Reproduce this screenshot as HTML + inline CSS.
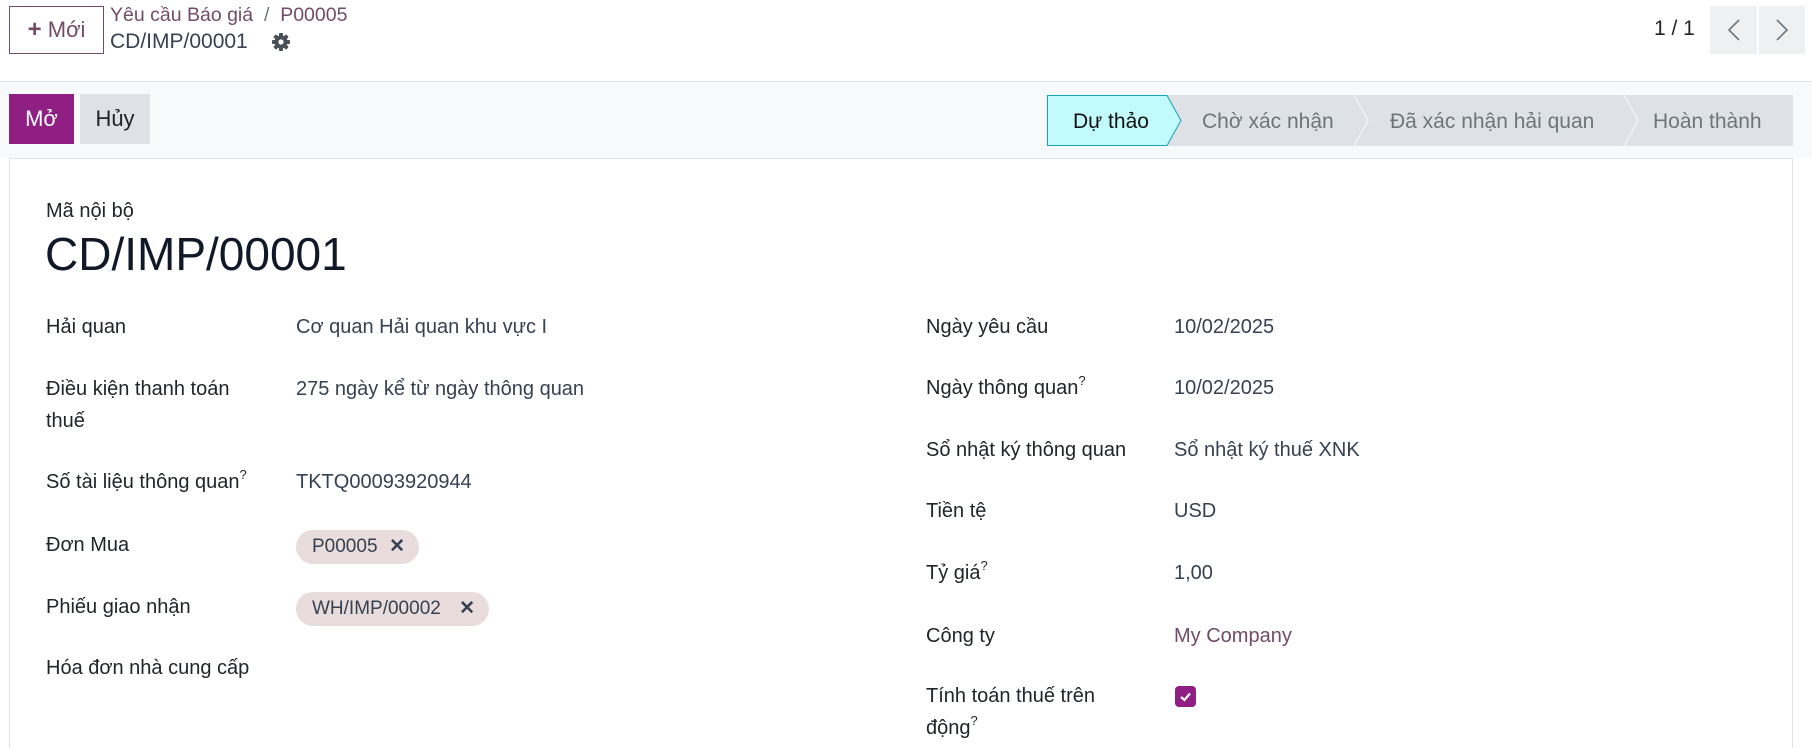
<!DOCTYPE html>
<html><head><meta charset="utf-8"><style>
*{box-sizing:border-box;margin:0;padding:0}
html,body{width:1812px;height:748px;overflow:hidden}
body{background:#fff;font-family:"Liberation Sans",sans-serif;color:#374151;font-size:20px;position:relative}
.a{position:absolute;white-space:nowrap;line-height:24px}
.lbl{color:#212529}
.val{color:#374151}
.tag{position:absolute;height:34px;border-radius:17px;background:#e8dcdc;color:#374151;font-size:19px;line-height:34px;padding-left:16px}
.tag b{position:absolute;right:14px;top:0;font-weight:bold;font-size:19px}
sup{font-size:13px;vertical-align:baseline;position:relative;top:-9px;line-height:0}
</style></head><body>
<div class="a" style="left:9px;top:6px;width:95px;height:48px;border:1px solid #714b67;color:#714b67;font-size:22px;line-height:46px;text-align:center"><b style="font-size:24px">+</b> Mới</div>
<div class="a" style="left:110px;top:3px;color:#714b67;font-size:19.5px">Yêu cầu Báo giá &nbsp;<span style="color:#6c757d">/</span>&nbsp; P00005</div>
<div class="a" style="left:110px;top:30px;color:#374151;font-size:21px">CD/IMP/00001</div>
<svg class="a" style="left:271px;top:32px" width="20" height="20" viewBox="0 0 20 20"><g fill="#495057"><circle cx="10" cy="10" r="6.5"/><rect x="8" y="1" width="4" height="18" rx="1"/><rect x="1" y="8" width="18" height="4" rx="1"/><rect x="8" y="1" width="4" height="18" rx="1" transform="rotate(45 10 10)"/><rect x="8" y="1" width="4" height="18" rx="1" transform="rotate(-45 10 10)"/></g><circle cx="10" cy="10" r="2.6" fill="#fff"/></svg>
<div class="a" style="left:1654px;top:17px;font-size:21px;color:#212529">1 / 1</div>
<div class="a" style="left:1710px;top:6px;width:47px;height:48px;background:#eef0f2"></div>
<div class="a" style="left:1759px;top:6px;width:46px;height:48px;background:#eef0f2"></div>
<svg class="a" style="left:1710px;top:6px" width="95" height="48"><path d="M29 14 L19 24 L29 34" stroke="#6c757d" stroke-width="1.6" fill="none"/><path d="M67 14 L77 24 L67 34" stroke="#6c757d" stroke-width="1.6" fill="none"/></svg>
<div class="a" style="left:0;top:81px;width:1812px;height:77px;background:#f8f9fa;border-top:1px solid #dee2e6"></div>
<div class="a" style="left:9px;top:94px;width:65px;height:50px;background:#8f1f82;color:#fff;font-size:22px;line-height:50px;text-align:center">Mở</div>
<div class="a" style="left:80px;top:94px;width:70px;height:50px;background:#dee2e6;color:#212529;font-size:22px;line-height:50px;text-align:center">Hủy</div>
<svg class="a" style="left:1047px;top:95px" width="746" height="51">
<rect x="0" y="0" width="746" height="51" fill="#dee2e6"/>
<path d="M0.5 0.5 H120 L134 25.5 L120 50.5 H0.5 Z" fill="#c2fbfc" stroke="#17a2b8"/>
<path d="M307 0 L321 25.5 L307 51" stroke="#f0f2f4" fill="none" stroke-width="1.5"/>
<path d="M577 0 L591 25.5 L577 51" stroke="#f0f2f4" fill="none" stroke-width="1.5"/>
<text x="26" y="33" font-family="Liberation Sans" font-size="21" fill="#111">Dự thảo</text>
<text x="155" y="33" font-family="Liberation Sans" font-size="21" fill="#6c757d">Chờ xác nhận</text>
<text x="343" y="33" font-family="Liberation Sans" font-size="21" fill="#6c757d">Đã xác nhận hải quan</text>
<text x="606" y="33" font-family="Liberation Sans" font-size="21" fill="#6c757d">Hoàn thành</text>
</svg>
<div class="a" style="left:9px;top:158px;width:1784px;height:590px;background:#fff;border:1px solid #dee2e6;border-bottom:none"></div>
<div class="a lbl" style="left:46px;top:199px;font-size:20px">Mã nội bộ</div>
<div class="a" style="left:45px;top:228px;font-size:46px;line-height:52px;color:#111827">CD/IMP/00001</div>

<div class="a lbl" style="left:46px;top:315px">Hải quan</div>
<div class="a val" style="left:296px;top:315px">Cơ quan Hải quan khu vực I</div>
<div class="a lbl" style="left:46px;top:373px;line-height:32px">Điều kiện thanh toán<br>thuế</div>
<div class="a val" style="left:296px;top:373px;line-height:32px">275 ngày kể từ ngày thông quan</div>
<div class="a lbl" style="left:46px;top:470px">Số tài liệu thông quan<sup>?</sup></div>
<div class="a val" style="left:296px;top:470px">TKTQ00093920944</div>
<div class="a lbl" style="left:46px;top:533px">Đơn Mua</div>
<div class="tag" style="left:296px;top:530px;width:123px">P00005<b>✕</b></div>
<div class="a lbl" style="left:46px;top:595px">Phiếu giao nhận</div>
<div class="tag" style="left:296px;top:592px;width:193px">WH/IMP/00002<b>✕</b></div>
<div class="a lbl" style="left:46px;top:656px">Hóa đơn nhà cung cấp</div>

<div class="a lbl" style="left:926px;top:315px">Ngày yêu cầu</div>
<div class="a val" style="left:1174px;top:315px">10/02/2025</div>
<div class="a lbl" style="left:926px;top:376px">Ngày thông quan<sup>?</sup></div>
<div class="a val" style="left:1174px;top:376px">10/02/2025</div>
<div class="a lbl" style="left:926px;top:438px">Sổ nhật ký thông quan</div>
<div class="a val" style="left:1174px;top:438px">Sổ nhật ký thuế XNK</div>
<div class="a lbl" style="left:926px;top:499px">Tiền tệ</div>
<div class="a val" style="left:1174px;top:499px">USD</div>
<div class="a lbl" style="left:926px;top:561px">Tỷ giá<sup>?</sup></div>
<div class="a val" style="left:1174px;top:561px">1,00</div>
<div class="a lbl" style="left:926px;top:624px">Công ty</div>
<div class="a" style="left:1174px;top:624px;color:#714b67">My Company</div>
<div class="a lbl" style="left:926px;top:680px;line-height:32px">Tính toán thuế trên<br>động<sup>?</sup></div>
<svg class="a" style="left:1175px;top:686px" width="21" height="21"><rect width="21" height="21" rx="4" fill="#8f1f82"/><path d="M6 11 L9.5 14 L15 7.5" stroke="#fff" stroke-width="2.2" fill="none"/></svg>
</body></html>
